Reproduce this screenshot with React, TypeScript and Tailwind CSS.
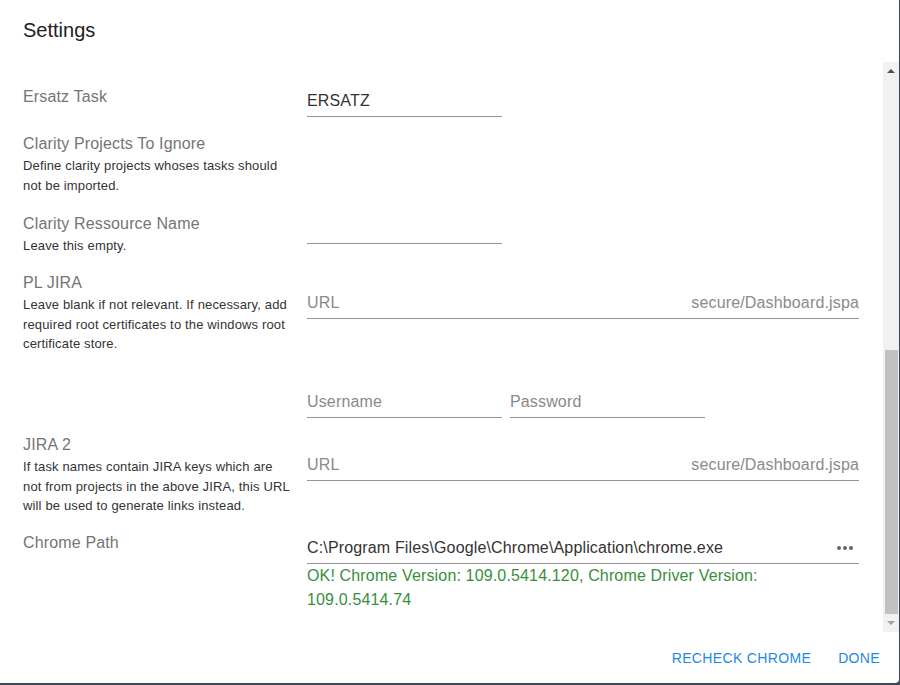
import type { ReactNode } from "react";

const FONT = { fontFamily: "'Liberation Sans', Arial, Helvetica, sans-serif" };

function Row({
  label,
  help,
  className = "",
  children,
}: {
  label: string;
  help?: string;
  className?: string;
  children?: ReactNode;
}) {
  return (
    <div className={"flex " + className}>
      <div className="w-[284px] shrink-0 pr-[14px]">
        <div className="text-base leading-6 text-[#757575]">{label}</div>
        {help && <div className="text-[13px] leading-[19.5px] text-[#333]">{help}</div>}
      </div>
      <div className="flex-1">{children}</div>
    </div>
  );
}

// underlined text field, text line 24px + 3px + 1px border
function Field({
  value,
  placeholder,
  end,
  className = "",
}: {
  value?: string;
  placeholder?: string;
  end?: ReactNode;
  className?: string;
}) {
  return (
    <div className={"flex items-center border-b border-[#949494] pb-[3px] " + className}>
      <div className="flex-1 text-base leading-6 whitespace-nowrap">
        {value ? (
          <span className="text-[#333]">{value}</span>
        ) : (
          <span className="text-[#8a8a8a]">{placeholder ?? "\u00a0"}</span>
        )}
      </div>
      {end}
    </div>
  );
}

function Scrollbar() {
  return (
    <div className="w-4 shrink-0 bg-[#f1f1f1] flex flex-col items-center">
      <svg width="16" height="17" viewBox="0 0 16 17" className="shrink-0">
        <path d="M4 11 L8 7 L12 11 Z" fill="#505050" />
      </svg>
      <div className="flex-1 w-full relative">
        <div className="absolute left-[2px] right-[1px] top-[271px] bottom-[1px] bg-[#c1c1c1]" />
      </div>
      <svg width="16" height="17" viewBox="0 0 16 17" className="shrink-0">
        <path d="M4 6 L8 10 L12 6 Z" fill="#a3a3a3" />
      </svg>
    </div>
  );
}

export default function App() {
  return (
    <div className="w-[900px] h-[685px] bg-[#3e4451] overflow-hidden tracking-[0.15px]" style={FONT}>
      <div className="w-[899px] h-[683px] bg-white rounded-br-[4px] flex flex-col">
        <div className="h-[62px] shrink-0 pl-[23px] pt-[14px] text-xl leading-8 text-[#212121] tracking-normal">
          Settings
        </div>

        <div className="h-[570px] shrink-0 flex">
          <div className="flex-1 overflow-hidden pl-[23px] pr-6 pt-[23px]">
            <Row label="Ersatz Task">
              <Field value="ERSATZ" className="mt-1 w-[195px]" />
            </Row>

            <Row
              label="Clarity Projects To Ignore"
              help="Define clarity projects whoses tasks should not be imported."
              className="mt-[15px]"
            />

            <Row label="Clarity Ressource Name" help="Leave this empty." className="mt-[17px]">
              <Field className="mt-1 w-[195px]" />
            </Row>

            <Row
              label="PL JIRA"
              help="Leave blank if not relevant. If necessary, add required root certificates to the windows root certificate store."
              className="mt-[15.5px]"
            >
              <Field
                placeholder="URL"
                className="mt-5"
                end={<span className="text-base leading-6 text-[#8a8a8a]">secure/Dashboard.jspa</span>}
              />
              <div className="flex gap-2 mt-[71px]">
                <Field placeholder="Username" className="w-[195px]" />
                <Field placeholder="Password" className="w-[195px]" />
              </div>
            </Row>

            <Row
              label="JIRA 2"
              help="If task names contain JIRA keys which are not from projects in the above JIRA, this URL will be used to generate links instead."
              className="mt-[15px]"
            >
              <Field
                placeholder="URL"
                className="mt-5"
                end={<span className="text-base leading-6 text-[#8a8a8a]">secure/Dashboard.jspa</span>}
              />
            </Row>

            <Row label="Chrome Path" className="mt-[15.5px]">
              <Field
                value="C:\Program Files\Google\Chrome\Application\chrome.exe"
                className="mt-[5px]"
                end={
                  <svg width="24" height="24" viewBox="0 0 24 24" className="mr-[2px]">
                    <circle cx="6" cy="12" r="2" fill="#666" />
                    <circle cx="12" cy="12" r="2" fill="#666" />
                    <circle cx="18" cy="12" r="2" fill="#666" />
                  </svg>
                }
              />
              <div className="text-base leading-6 text-[#388e3c]">
                OK! Chrome Version: 109.0.5414.120, Chrome Driver Version: 109.0.5414.74
              </div>
            </Row>
          </div>
          <Scrollbar />
        </div>

        <div className="flex-1 flex items-start justify-end gap-[11px] pt-2 pr-[11px]">
          <button className="h-9 px-2 text-sm uppercase tracking-[0.35px] text-[#1e88e5]">
            Recheck Chrome
          </button>
          <button className="h-9 px-2 text-sm uppercase tracking-[0.35px] text-[#1e88e5]">
            Done
          </button>
        </div>
      </div>
    </div>
  );
}
